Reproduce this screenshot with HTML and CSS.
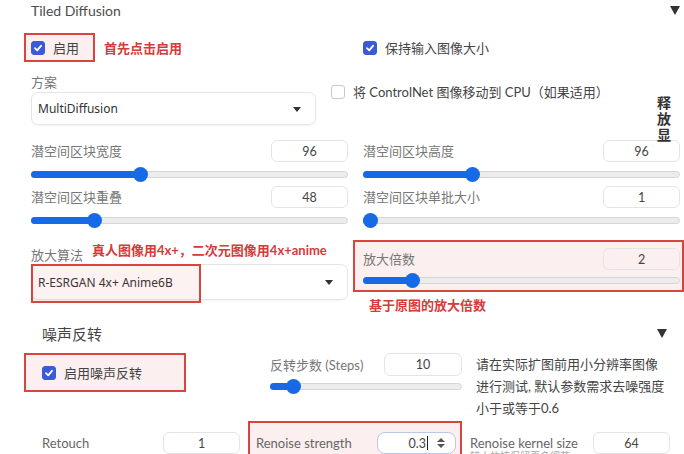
FILE: index.html
```html
<!DOCTYPE html>
<html lang="zh">
<head>
  <meta charset="UTF-8" />
  <title>Tiled Diffusion</title>
  <link rel="stylesheet" href="styles.css">
</head>
<body>
  <div class="page">
    <div class="acc-head">
      <span class="acc-title">Tiled Diffusion</span>
      <span class="tri"></span>
    </div>

    <div class="grid row-a">
      <div class="flex-row">
        <label class="check mark-box enable"><span class="box on"><svg width="10" height="10" viewBox="0 0 10 10"><polyline points="2,5.2 4.2,7.3 8,2.8" fill="none" stroke="#fff" stroke-width="1.8" stroke-linecap="round" stroke-linejoin="round"/></svg></span>启用</label>
        <span class="note">首先点击启用</span>
      </div>
      <label class="check"><span class="box on"><svg width="10" height="10" viewBox="0 0 10 10"><polyline points="2,5.2 4.2,7.3 8,2.8" fill="none" stroke="#fff" stroke-width="1.8" stroke-linecap="round" stroke-linejoin="round"/></svg></span>保持输入图像大小</label>
    </div>

    <div class="row-b">
      <div class="method">
        <div class="label">方案</div>
        <div class="select">MultiDiffusion<span class="caret"></span></div>
      </div>
      <label class="check cpu"><span class="box"></span>将 ControlNet 图像移动到 CPU（如果适用）</label>
    </div>

    <div class="grid sliders">
      <div class="slider">
        <div class="slider-top"><span class="label">潜空间区块宽度</span><span class="num">96</span></div>
        <div class="range"><div class="track"><div class="fill" style="--p:.34"></div></div></div>
      </div>
      <div class="slider">
        <div class="slider-top"><span class="label">潜空间区块高度</span><span class="num">96</span></div>
        <div class="range"><div class="track"><div class="fill" style="--p:.34"></div></div></div>
      </div>
      <div class="slider">
        <div class="slider-top"><span class="label">潜空间区块重叠</span><span class="num">48</span></div>
        <div class="range"><div class="track"><div class="fill" style="--p:.185"></div></div></div>
      </div>
      <div class="slider">
        <div class="slider-top"><span class="label">潜空间区块单批大小</span><span class="num">1</span></div>
        <div class="range"><div class="track"><div class="fill" style="--p:0"></div></div></div>
      </div>
    </div>

    <div class="grid row-e">
      <div class="upscaler">
        <div class="label">放大算法</div>
        <div class="select tall">R-ESRGAN 4x+ Anime6B<span class="caret"></span><span class="mark-over"></span></div>
        <span class="note note-float">真人图像用4x+，二次元图像用4x+anime</span>
      </div>
      <div>
        <div class="slider mark-box scale">
          <div class="slider-top"><span class="label">放大倍数</span><span class="num">2</span></div>
          <div class="range"><div class="track"><div class="fill" style="--p:.14"></div></div></div>
        </div>
        <div class="note scale-note">基于原图的放大倍数</div>
      </div>
    </div>

    <div class="side-tag">释<br>放<br>显</div>

    <section class="noise">
      <div class="acc-head">
        <span class="acc-title">噪声反转</span>
        <span class="tri"></span>
      </div>

      <div class="noise-row">
        <div>
          <label class="check mark-box noise-on"><span class="box on"><svg width="10" height="10" viewBox="0 0 10 10"><polyline points="2,5.2 4.2,7.3 8,2.8" fill="none" stroke="#fff" stroke-width="1.8" stroke-linecap="round" stroke-linejoin="round"/></svg></span>启用噪声反转</label>
        </div>
        <div class="slider steps">
          <div class="slider-top"><span class="label">反转步数 (Steps)</span><span class="num">10</span></div>
          <div class="range"><div class="track"><div class="fill" style="--p:.09"></div></div></div>
        </div>
        <p class="tip">请在实际扩图前用小分辨率图像<br>进行测试, 默认参数需求去噪强度<br>小于或等于0.6</p>
      </div>

      <div class="noise-row2">
        <div class="pair retouch">
          <span class="label">Retouch</span>
          <span class="num">1</span>
        </div>
        <div class="pair mark-box renoise">
          <span class="label">Renoise strength</span>
          <span class="spin-input">
            <span class="val">0.3</span><span class="cursor"></span>
            <span class="spin"><i class="up"></i><i class="down"></i></span>
          </span>
        </div>
        <div class="pair kernel">
          <span class="kernel-label">
            <span class="label">Renoise kernel size</span>
            <span class="hint">较大的核保留更多细节</span>
          </span>
          <span class="num">64</span>
        </div>
      </div>
    </section>
  </div>
</body>
</html>
```

FILE: styles.css
```css
* {
  box-sizing: border-box;
}

html,
body {
  margin: 0;
  padding: 0;
  overflow: hidden;
}

body {
  width: 684px;
  height: 454px;
  background: #fff;
  font-family: 'Lato', 'Noto Sans CJK SC', sans-serif;
  font-size: 13px;
  color: #444;
}

.page {
  position: relative;
}

/* accordion headers */
.acc-head {
  display: flex;
  justify-content: space-between;
  align-items: center;
  height: 20px;
  padding: 0 4px 0 31px;
}

.acc-title {
  font-size: 14px;
  color: #4d4d4d;
}

.tri {
  width: 0;
  height: 0;
  border-left: 5px solid transparent;
  border-right: 5px solid transparent;
  border-top: 9px solid #333;
}

.grid {
  display: grid;
  grid-template-columns: 317px 317px;
  column-gap: 15px;
  padding-left: 31px;
}

.label {
  color: #777;
  font-size: 13px;
  line-height: 18px;
}

.note {
  color: #d83a3a;
  font-weight: 700;
  font-size: 13px;
  white-space: nowrap;
}

/* checkboxes */
.check {
  display: flex;
  align-items: center;
  gap: 8px;
  color: #444;
  line-height: 18px;
}

.box {
  flex: none;
  width: 14px;
  height: 14px;
  border-radius: 3px;
  border: 1px solid #c9c9c9;
  background: #fff;
  display: flex;
  align-items: center;
  justify-content: center;
}

.box.on {
  background: #3b5bd6;
  border-color: #3b5bd6;
}

.mark-box {
  border: 2px solid #d9443f;
  background: #fcefef;
}

.row-a {
  margin-top: 13px;
  align-items: center;
}

.flex-row {
  display: flex;
  align-items: center;
  gap: 9px;
}

.enable {
  height: 29px;
  margin-left: -7px;
  padding: 0 14px 0 5px;
}

/* scheme row */
.row-b {
  display: flex;
  gap: 15px;
  padding-left: 31px;
  margin-top: 11px;
}

.method {
  width: 285px;
}

.select {
  position: relative;
  height: 33px;
  margin-top: 1px;
  padding: 0 6px;
  border: 1px solid #e6e6e6;
  border-radius: 7px;
  box-shadow: 0 1px 2px rgba(0, 0, 0, 0.05);
  display: flex;
  align-items: center;
  font-family: 'Noto Sans', 'Noto Sans CJK SC', sans-serif;
  font-size: 12px;
  color: #333;
}

.select.tall {
  height: 36px;
}

.caret {
  position: absolute;
  right: 14px;
  top: 50%;
  margin-top: -2px;
  border-left: 4px solid transparent;
  border-right: 4px solid transparent;
  border-top: 5px solid #333;
}

.cpu {
  align-self: flex-start;
  margin-top: 10px;
}

/* sliders */
.sliders {
  margin-top: 15px;
}

.slider-top {
  display: flex;
  justify-content: space-between;
  align-items: center;
  height: 22px;
}

.num {
  flex: none;
  width: 77px;
  height: 22px;
  border: 1px solid #e4e4e4;
  border-radius: 6px;
  display: flex;
  align-items: center;
  justify-content: center;
  font-size: 12.5px;
  color: #444;
}

.range {
  height: 24px;
  display: flex;
  align-items: center;
}

.track {
  position: relative;
  flex: 1;
  height: 7px;
  border-radius: 4px;
  background: #ececec;
  border: 1px solid #d6d6d6;
}

.fill {
  position: absolute;
  left: -1px;
  top: -1px;
  bottom: -1px;
  width: calc(8px + (100% - 14px) * var(--p));
  background: #1769e6;
  border-radius: 4px 0 0 4px;
}

.fill::after {
  content: "";
  position: absolute;
  right: -7px;
  top: 50%;
  width: 15px;
  height: 15px;
  margin-top: -7.5px;
  border-radius: 50%;
  background: #1769e6;
}

/* upscaler row */
.row-e {
  margin-top: 8px;
  align-items: start;
}

.upscaler {
  position: relative;
  padding-top: 7px;
}

.upscaler .label {
  line-height: 16px;
}

.mark-over {
  position: absolute;
  left: -1px;
  top: -1px;
  width: 170px;
  height: 39px;
  border: 2px solid #d9443f;
  background: rgba(225, 70, 70, 0.07);
}

.note-float {
  position: absolute;
  left: 61px;
  top: 0;
}

.scale {
  height: 52px;
  margin: 0 -4px 0 -10px;
  padding: 6px 2px 0 8px;
}

.scale .range {
  height: 20px;
}

.scale-note {
  margin: 5px 0 0 6px;
  line-height: 16px;
}

.side-tag {
  position: absolute;
  left: 657px;
  top: 95px;
  font-size: 14px;
  font-weight: 700;
  line-height: 16px;
  color: #333;
}

/* noise inversion */
.noise {
  margin-top: 10px;
}

.noise .acc-head {
  height: 20px;
  padding: 0 17px 0 42px;
}

.noise .acc-title {
  font-size: 15px;
  color: #444;
}

.noise-row {
  display: grid;
  grid-template-columns: 232px 192px 1fr;
  column-gap: 14px;
  padding-left: 24px;
  margin-top: 10px;
}

.noise-on {
  width: 162px;
  height: 39px;
  padding-left: 16px;
}

.steps .slider-top {
  height: 23px;
}

.steps .num {
  width: 78px;
  height: 23px;
}

.steps .range {
  height: 20px;
}

.tip {
  margin: 0;
  line-height: 22px;
  color: #444;
}

.noise-row2 {
  display: grid;
  grid-template-columns: 224px 214px 1fr;
  padding-left: 24px;
  margin-top: 2px;
}

.pair {
  display: flex;
  justify-content: space-between;
  align-items: center;
}

.retouch {
  padding: 11px 8px 0 18px;
  align-items: flex-start;
}

.retouch .label,
.renoise .label {
  line-height: 22px;
  color: #666;
}

.renoise {
  height: 40px;
  padding: 9px 4px 0 6px;
  align-items: flex-start;
}

.spin-input {
  width: 79px;
  height: 22px;
  border: 1px solid #b9c8e6;
  border-radius: 8px;
  background: #fff;
  display: flex;
  align-items: center;
  justify-content: flex-end;
  padding-right: 10px;
  font-size: 12.5px;
  color: #444;
}

.cursor {
  width: 1px;
  height: 14px;
  background: #222;
  margin: 0 9px 0 1px;
}

.spin {
  display: flex;
  flex-direction: column;
  gap: 2px;
}

.spin i {
  width: 0;
  height: 0;
  border-left: 4px solid transparent;
  border-right: 4px solid transparent;
}

.spin .up {
  border-bottom: 4px solid #555;
}

.spin .down {
  border-top: 4px solid #555;
}

.kernel {
  padding: 11px 14px 0 8px;
  align-items: flex-start;
  min-width: 0;
}

.kernel-label {
  display: flex;
  flex-direction: column;
  flex: 1;
  min-width: 0;
  padding-top: 4px;
}

.kernel .label {
  line-height: 14px;
  color: #666;
  white-space: nowrap;
}

.hint {
  font-size: 10px;
  line-height: 12px;
  color: #aaa;
  white-space: nowrap;
  overflow: hidden;
}
```
